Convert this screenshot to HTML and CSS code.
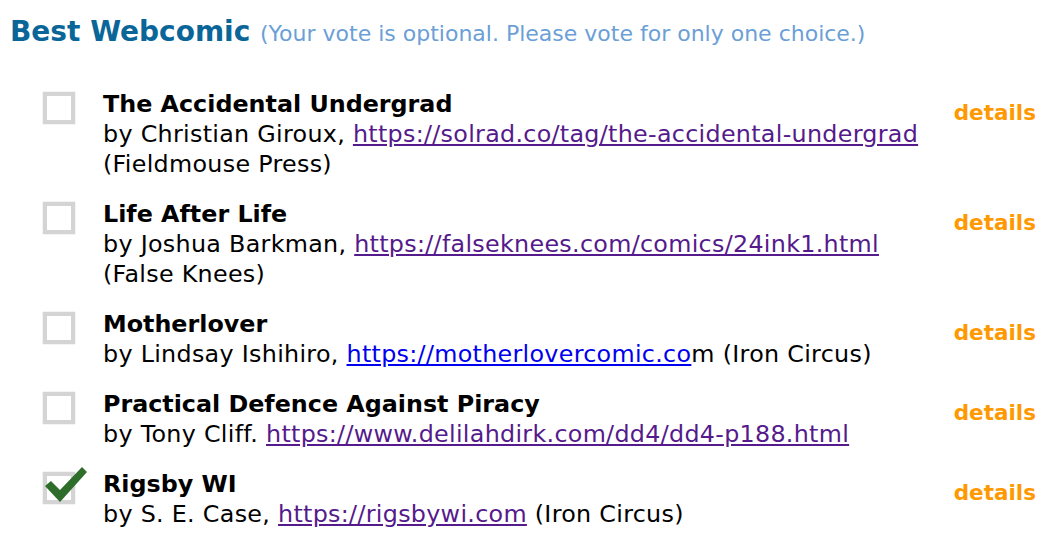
FILE: index.html
```
<!DOCTYPE html>
<html lang="en">
<head>
    <meta charset="UTF-8">
    <title>Best Webcomic</title>
    <link rel="stylesheet" href="styles.css">
</head>
<body>
    <div class="category">
        <h2 class="cat-title">Best Webcomic <span class="cat-note">(Your vote is optional. Please vote for only one choice.)</span></h2>

        <ul class="nominees">
            <li class="nominee">
                <span class="box"></span>
                <div class="info">
                    <div class="name">The Accidental Undergrad</div>
                    <div class="credit">by Christian Giroux, <a class="visited" href="#">https://solrad.co/tag/the-accidental-undergrad</a><br>(Fieldmouse Press)</div>
                </div>
                <a class="details" href="#">details</a>
            </li>
            <li class="nominee">
                <span class="box"></span>
                <div class="info">
                    <div class="name">Life After Life</div>
                    <div class="credit">by Joshua Barkman, <a class="visited" href="#">https://falseknees.com/comics/24ink1.html</a><br>(False Knees)</div>
                </div>
                <a class="details" href="#">details</a>
            </li>
            <li class="nominee">
                <span class="box"></span>
                <div class="info">
                    <div class="name">Motherlover</div>
                    <div class="credit">by Lindsay Ishihiro, <a class="fresh" href="#">https://motherlovercomic.co</a>m (Iron Circus)</div>
                </div>
                <a class="details" href="#">details</a>
            </li>
            <li class="nominee">
                <span class="box"></span>
                <div class="info">
                    <div class="name">Practical Defence Against Piracy</div>
                    <div class="credit">by Tony Cliff. <a class="visited" href="#">https://www.delilahdirk.com/dd4/dd4-p188.html</a></div>
                </div>
                <a class="details" href="#">details</a>
            </li>
            <li class="nominee">
                <span class="box checked">
                    <svg class="tick" viewBox="0 0 44 38" width="44" height="38">
                        <path d="M1 20 L7 15 L16 24 L38 1 L43 6 L16 36 Z" fill="#2e6e2a"/>
                    </svg>
                </span>
                <div class="info">
                    <div class="name">Rigsby WI</div>
                    <div class="credit">by S. E. Case, <a class="visited" href="#">https://rigsbywi.com</a> (Iron Circus)</div>
                </div>
                <a class="details" href="#">details</a>
            </li>
        </ul>
    </div>
</body>
</html>
```

FILE: styles.css
```
body {
    margin: 0;
    padding: 13px 10px;
    background: #fff;
    font-family: "DejaVu Sans", Verdana, sans-serif;
    color: #000;
}

.cat-title {
    margin: 0;
    font-size: 28px;
    font-weight: bold;
    color: #0a6698;
    line-height: 38px;
}

.cat-note {
    font-size: 22px;
    font-weight: normal;
    color: #6b9fd6;
}

.nominees {
    list-style: none;
    margin: 36px 0 0;
    padding: 0 6px 0 33px;
    display: flex;
    flex-direction: column;
    gap: 20px;
}

.nominee {
    display: flex;
    align-items: flex-start;
}

.box {
    position: relative;
    width: 24px;
    height: 24px;
    border: 4px solid #d4d4d4;
    margin-top: 3px;
    flex-shrink: 0;
    box-shadow: 0 0 1px #bbb;
}

.tick {
    position: absolute;
    left: -3px;
    top: -10px;
}

.info {
    flex: 1;
    margin-left: 28px;
    font-size: 23.8px;
    line-height: 30px;
}

.name {
    font-weight: bold;
}

.credit {
    letter-spacing: 0.3px;
}

.credit a {
    text-decoration: underline;
}

.visited {
    color: #551a8b;
}

.fresh {
    color: #0000ee;
}

.details {
    font-size: 21.5px;
    font-weight: bold;
    color: #ff9900;
    text-decoration: none;
    margin-top: 11px;
}
```
